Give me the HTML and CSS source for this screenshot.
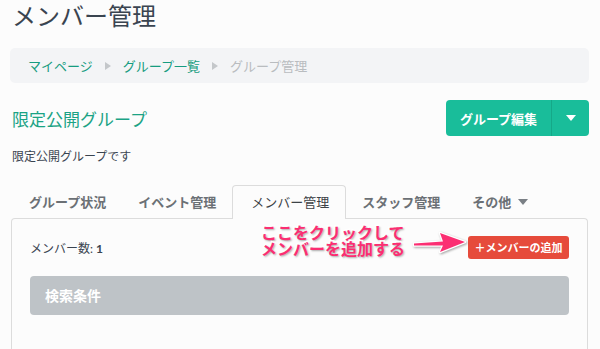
FILE: index.html
```html
<!DOCTYPE html>
<html lang="ja">
<head>
  <meta charset="UTF-8" />
  <meta name="viewport" content="width=device-width, initial-scale=1.0"/>
  <title>メンバー管理</title>
  <link rel="stylesheet" href="styles.css">
</head>
<body>
  <div class="page">
    <h1>メンバー管理</h1>

    <div class="breadcrumb">
      <a href="#">マイページ</a>
      <span class="sep"></span>
      <a href="#">グループ一覧</a>
      <span class="sep"></span>
      <span class="current">グループ管理</span>
    </div>

    <div class="group-head">
      <h2>限定公開グループ</h2>
      <div class="btn-group">
        <button class="btn-edit">グループ編集</button>
        <button class="btn-caret"><span class="caret"></span></button>
      </div>
    </div>

    <p class="desc">限定公開グループです</p>

    <ul class="tabs">
      <li>グループ状況</li>
      <li>イベント管理</li>
      <li class="active">メンバー管理</li>
      <li>スタッフ管理</li>
      <li>その他 <span class="caret grey"></span></li>
    </ul>

    <div class="panel">
      <div class="panel-row">
        <span class="count">メンバー数: <b>1</b></span>
        <button class="btn-add">＋メンバーの追加</button>
      </div>

      <div class="search">検索条件</div>
    </div>
  </div>

  <!-- help callout drawn over the panel -->
  <div class="note">
    <p>ここをクリックして<br>メンバーを追加する</p>
    <svg class="arrow" width="56" height="26" viewBox="0 0 56 26">
      <path d="M2 13.5 L31 11.5 L28 3 L53 12 L28 22 L31 15.5 L2 15.5 Z" fill="#fb2e72" stroke="#fff" stroke-width="2.5" stroke-linejoin="round" paint-order="stroke fill"/>
    </svg>
  </div>
</body>
</html>
```

FILE: styles.css
```css
body {
  margin: 0;
  background: #fcfcfc;
  font-family: "Lato", "Noto Sans CJK JP", sans-serif;
  color: #34495e;
  position: relative;
}
.page {
  padding: 0 11px 0 10px;
}
h1 {
  margin: 0;
  padding-left: 2px;
  font-size: 24px;
  font-weight: normal;
  line-height: 32px;
  color: #3a4450;
}
.breadcrumb {
  margin-top: 16px;
  height: 35px;
  padding: 0 18px;
  display: flex;
  align-items: center;
  background: #f3f4f6;
  border-radius: 5px;
  font-size: 13px;
}
.breadcrumb a {
  color: #169c80;
  text-decoration: none;
}
.breadcrumb .current { color: #b9bcbf; }
.sep {
  width: 0;
  height: 0;
  margin: 0 12px 0 12px;
  border-top: 4px solid transparent;
  border-bottom: 4px solid transparent;
  border-left: 6px solid #c4c7ca;
}
.group-head {
  margin-top: 17px;
  display: flex;
  justify-content: space-between;
  align-items: center;
}
h2 {
  margin: 0;
  padding-left: 2px;
  font-size: 17px;
  font-weight: normal;
  color: #1ba385;
}
.btn-group {
  display: flex;
  height: 36px;
  border-radius: 4px;
  overflow: hidden;
}
.btn-group button {
  border: none;
  background: #19bd9a;
  color: white;
  font-family: inherit;
  cursor: pointer;
}
.btn-edit {
  width: 106px;
  font-size: 13px;
  font-weight: bold;
  border-right: 1px solid #15a888 !important;
}
.btn-caret {
  width: 37px;
  display: flex;
  align-items: center;
  justify-content: center;
}
.caret {
  display: inline-block;
  width: 0;
  height: 0;
  border-left: 5px solid transparent;
  border-right: 5px solid transparent;
  border-top: 6px solid #fff;
}
.caret.grey {
  border-top-color: #7a7f85;
  margin-left: 4px;
  vertical-align: 2px;
}
.desc {
  margin: 12px 0 0;
  padding-left: 2px;
  font-size: 12px;
  line-height: 18px;
  color: #3a4450;
}
.tabs {
  list-style: none;
  margin: 19px 0 0;
  padding: 0 0 0 3px;
  display: flex;
}
.tabs li {
  height: 33px;
  line-height: 33px;
  padding: 0 15px;
  font-size: 13px;
  font-weight: bold;
  color: #6b7075;
  box-sizing: border-box;
  border: 1px solid transparent;
  border-bottom: none;
}
.tabs li.active {
  padding: 0 16px 0 18px;
  background: #fcfcfc;
  border-color: #dcdcdc;
  border-radius: 4px 4px 0 0;
  margin-bottom: -1px;
  height: 34px;
  color: #3d4247;
  font-weight: normal;
  position: relative;
}
.panel {
  margin: 0 1px;
  border: 1px solid #dcdcdc;
  border-bottom: none;
  border-radius: 4px 4px 0 0;
  padding: 16px 18px 40px;
}
.panel-row {
  display: flex;
  justify-content: space-between;
  align-items: center;
  height: 24px;
}
.count {
  font-size: 12px;
  color: #3a4450;
}
.btn-add {
  width: 101px;
  height: 23px;
  border: none;
  border-radius: 3px;
  background: #e64b3b;
  color: white;
  font-family: inherit;
  font-size: 11px;
  font-weight: bold;
  padding: 0;
  cursor: pointer;
}
.note {
  position: absolute;
  left: 261px;
  top: 225px;
  display: flex;
  align-items: center;
}
.note p {
  margin: 0;
  font-size: 16px;
  line-height: 16px;
  font-weight: bold;
  color: #fb2e72;
  -webkit-text-stroke: 3px #fff;
  paint-order: stroke fill;
  text-shadow: 1px 1px 2px rgba(0,0,0,0.35);
}
.arrow {
  margin-left: 7px;
  margin-top: 3px;
  filter: drop-shadow(1px 1px 1px rgba(0,0,0,0.35));
}
.search {
  margin-top: 17px;
  height: 39px;
  line-height: 39px;
  padding-left: 15px;
  background: #bec3c7;
  border-radius: 4px;
  color: #fff;
  font-size: 14px;
  font-weight: bold;
}
```
